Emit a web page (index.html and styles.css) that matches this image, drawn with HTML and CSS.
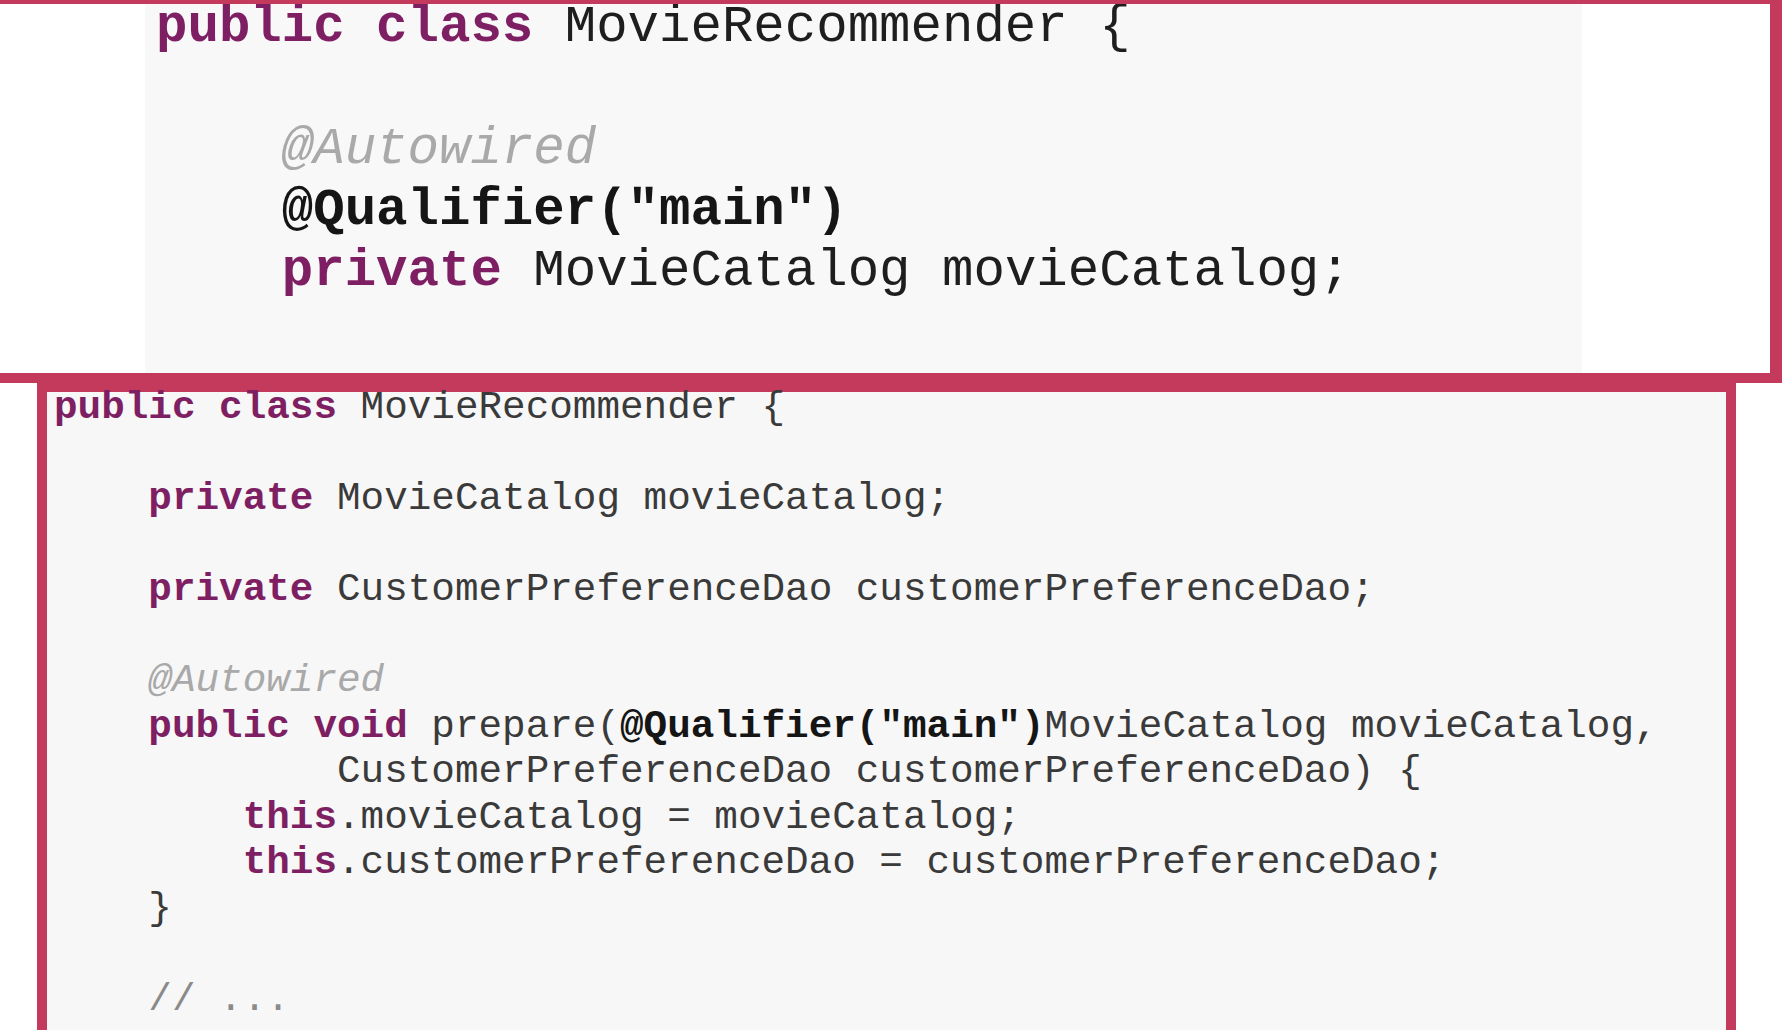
FILE: index.html
```html
<!DOCTYPE html>
<html lang="en">
<head>
<meta charset="UTF-8">
<meta name="viewport" content="width=device-width, initial-scale=1.0">
<title>MovieRecommender</title>
<link rel="stylesheet" href="styles.css">
</head>
<body>
<div class="slide">
  <div class="frame frame-top">
    <div class="panel">
<pre class="code code-big"><span class="kw">public class</span> MovieRecommender {

    <span class="off">@Autowired</span>
    <span class="ann">@Qualifier("main")</span>
    <span class="kw">private</span> MovieCatalog movieCatalog;</pre>
    </div>
  </div>
  <div class="frame frame-bottom">
<pre class="code code-small"><span class="kw">public class</span> MovieRecommender {

    <span class="kw">private</span> MovieCatalog movieCatalog;

    <span class="kw">private</span> CustomerPreferenceDao customerPreferenceDao;

    <span class="off">@Autowired</span>
    <span class="kw">public void</span> prepare(<span class="ann">@Qualifier("main")</span>MovieCatalog movieCatalog,
            CustomerPreferenceDao customerPreferenceDao) {
        <span class="kw">this</span>.movieCatalog = movieCatalog;
        <span class="kw">this</span>.customerPreferenceDao = customerPreferenceDao;
    }

    <span class="comment">// ...</span></pre>
  </div>
</div>
</body>
</html>
```
FILE: styles.css
```css
  body {
    margin: 0;
    padding: 0;
    background-color: #fff;
    overflow: hidden;
  }

  .slide {
    width: 1788px;
    height: 1030px;
    overflow: hidden;
  }

  .frame {
    border: 10px solid #c33a5c;
    box-sizing: border-box;
  }

  /* верхняя рамка уходит за левый край */
  .frame-top {
    width: 1802px;
    height: 383px;
    margin-left: -20px;
    border-top-width: 4px;
    border-right-width: 12px;
    background-color: #fff;
    overflow: hidden;
  }

  .panel {
    display: flow-root; /* чтобы отрицательный отступ не схлопывался */
    margin-left: 155px;
    width: 1437px;
    height: 100%;
    padding-left: 11px;
    box-sizing: border-box;
    background-color: #f8f8f8;
  }

  .frame-bottom {
    width: 1699px;
    height: 700px;
    margin-left: 37px;
    border-top-width: 9px;
    background-color: #f7f7f7;
    padding-left: 7px;
  }

  .code {
    margin: 0;
    font-family: "Liberation Mono", "Courier New", monospace;
    color: #2b2b2b;
    white-space: pre;
  }

  .code-big {
    font-size: 52.4px;
    line-height: 61px;
    margin-top: -7px;
    color: #1e1e1e;
  }

  .code-small {
    font-size: 39.3px;
    line-height: 45.5px;
    margin-top: -7px;
    color: #3a3a3a;
  }

  .kw {
    color: #7f1f63;
    font-weight: bold;
  }

  .ann {
    color: #151515;
    font-weight: bold;
  }

  .off {
    color: #a9a9a9;
    font-style: italic;
  }

  .comment {
    color: #8a8a8a;
  }
```
